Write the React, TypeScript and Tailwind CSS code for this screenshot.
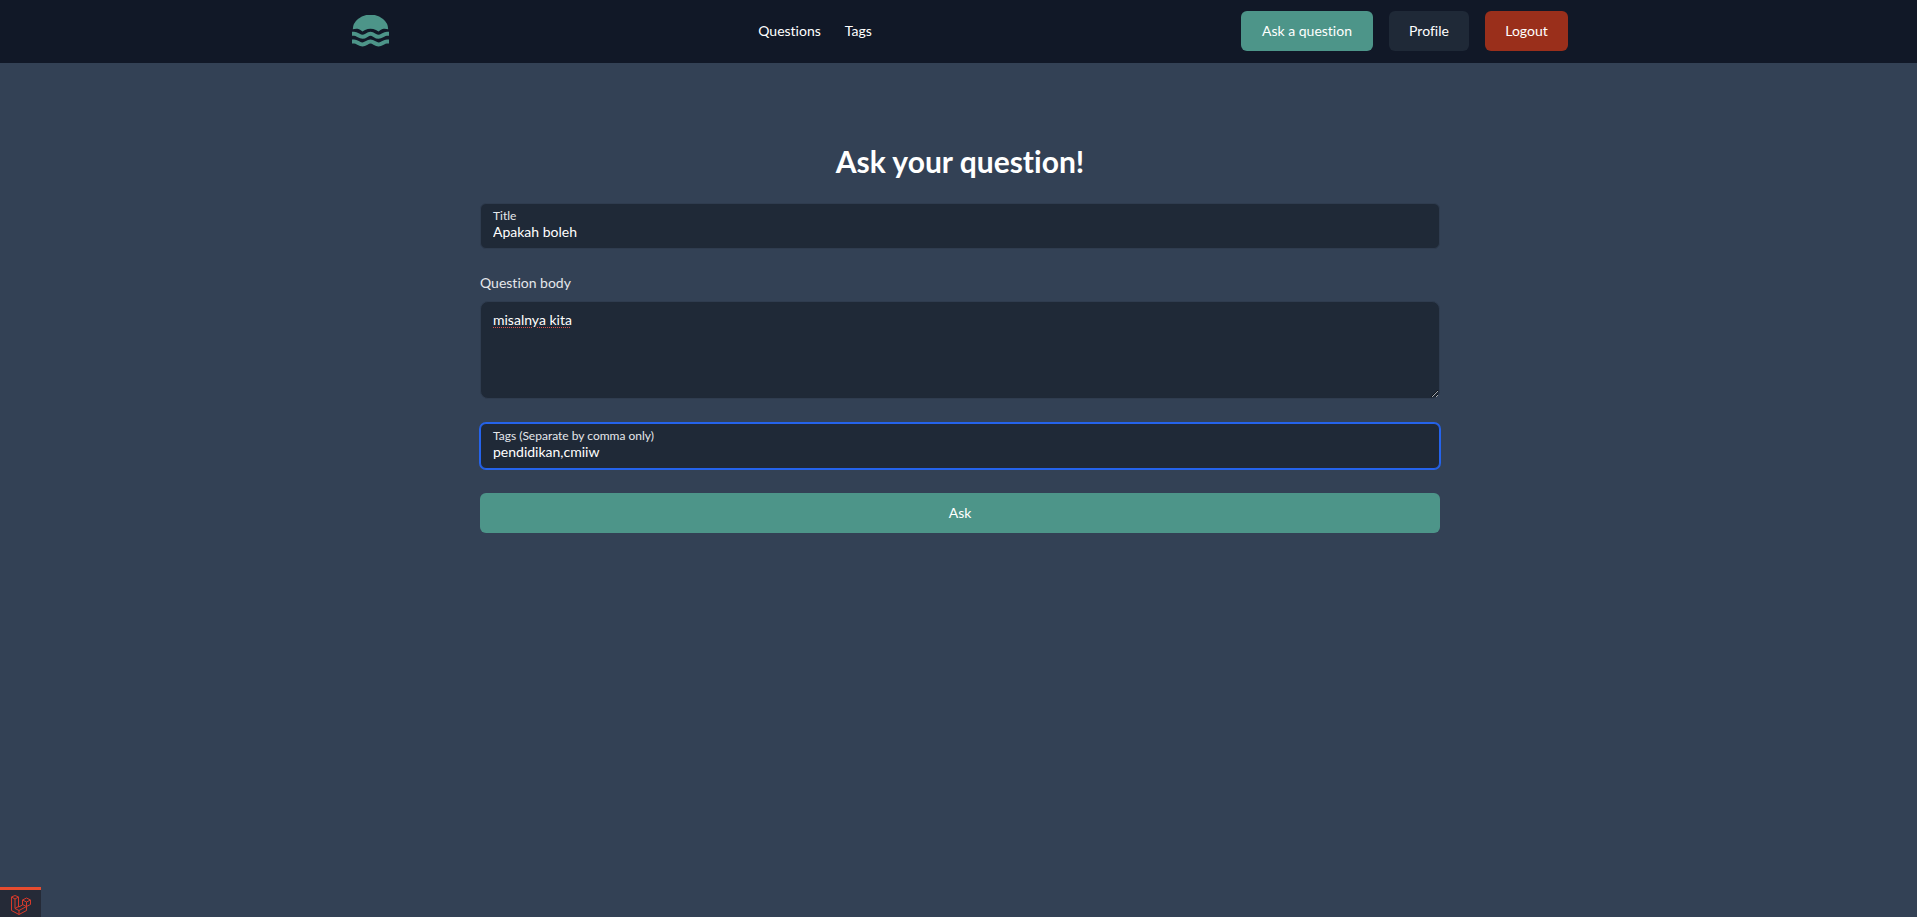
import { useState } from "react";

const buttonBase =
  "inline-flex h-10 items-center justify-center rounded-md text-sm text-white";

function WaveLogo() {
  return (
    <svg viewBox="0 0 37 32" className="h-8 w-[37px]" fill="#4d9589" aria-hidden="true">
      <path d="M0.8 14.2A17.7 14.6 0 0 1 36.2 14.2C33 13.3 30.5 13.5 28.5 15L26.5 16.5L24 15C20.5 13.2 16.5 13.2 13 15L10.5 16.5L8.5 15C6.5 13.5 4 13.3 0.8 14.2Z" />
      <path
        d="M0 18.8H2C5.5 18.8 7 21.8 10.5 21.8S15 18.8 18.5 18.8S23 21.8 26.5 21.8S31.5 18.8 35 18.8H37"
        fill="none"
        stroke="#4d9589"
        strokeWidth="4"
      />
      <path
        d="M0 26.6H2C5.5 26.6 7 29.5 10.5 29.5S15 26.6 18.5 26.6S23 29.5 26.5 29.5S31.5 26.6 35 26.6H37"
        fill="none"
        stroke="#4d9589"
        strokeWidth="4"
      />
    </svg>
  );
}

function LaravelMark() {
  return (
    <svg
      viewBox="0 0 20 20"
      className="h-5 w-5"
      fill="none"
      stroke="#d63a2b"
      strokeWidth="1"
      strokeLinejoin="round"
      aria-hidden="true"
    >
      <path d="M0.5 2L4 0.5L7.5 2V12L11.5 10V5L15.5 3L19.5 5V9.5L15.5 11.5V15.5L8 19.5L0.5 15.5ZM0.5 2L4 4L7.5 2M4 4V13.5L8 15.5L15.5 11.5L11.5 9.5M11.5 5L15.5 7L19.5 5M15.5 7V11.5M8 15.5V19.5M4 13.5L7.5 11.5" />
    </svg>
  );
}

type FieldProps = {
  id: string;
  label: string;
  value: string;
  focused?: boolean;
  onChange: (value: string) => void;
};

function FloatingField({ id, label, value, focused, onChange }: FieldProps) {
  const ring = focused
    ? "border-[#2563eb] ring-1 ring-[#2563eb]"
    : "border-[#2f3c4f]";
  return (
    <div className={`flex h-[46px] flex-col rounded-md border bg-[#1f2937] px-3 pt-1 ${ring}`}>
      <label htmlFor={id} className="text-xs text-gray-200">
        {label}
      </label>
      <input
        id={id}
        type="text"
        value={value}
        onChange={(event) => onChange(event.target.value)}
        className="h-4 w-full bg-transparent text-sm leading-4 text-white outline-none"
      />
    </div>
  );
}

export default function App() {
  const [title, setTitle] = useState("Apakah boleh");
  const [body, setBody] = useState("misalnya kita");
  const [tags, setTags] = useState("pendidikan,cmiiw");

  return (
    <div className="flex min-h-screen flex-col bg-[#334155] font-['Lato',sans-serif] text-white [font-variant-ligatures:none]">
      <header className="bg-[#111827] pl-[3px]">
        <div className="mx-auto flex max-w-[1216px] items-center justify-between pt-[11px] pb-3">
          <a href="#" aria-label="Home">
            <WaveLogo />
          </a>
          <nav className="flex gap-6 text-sm">
            <a href="#questions">Questions</a>
            <a href="#tags">Tags</a>
          </nav>
          <div className="flex gap-4">
            <button type="button" className={`${buttonBase} w-[132px] bg-[#4d9589]`}>
              Ask a question
            </button>
            <button type="button" className={`${buttonBase} w-20 bg-[#1f2937]`}>
              Profile
            </button>
            <button type="button" className={`${buttonBase} w-[83px] bg-[#9a2f1b]`}>
              Logout
            </button>
          </div>
        </div>
      </header>

      <main className="flex-1 pl-[3px] pt-20">
        <form
          className="mx-auto flex max-w-[960px] flex-col gap-6"
          onSubmit={(event) => event.preventDefault()}
        >
          <h1 className="text-center text-3xl font-bold">Ask your question!</h1>
          <FloatingField id="title" label="Title" value={title} onChange={setTitle} />
          <div className="flex flex-col gap-2">
            <label htmlFor="body" className="text-sm text-gray-200">
              Question body
            </label>
            <textarea
              id="body"
              value={body}
              spellCheck={false}
              onChange={(event) => setBody(event.target.value)}
              className="block h-[98px] w-full rounded-lg border border-[#2f3c4f] bg-[#1f2937] px-3 py-2 text-sm text-white underline decoration-[#e0524a] decoration-dotted decoration-1 underline-offset-2 outline-none"
            />
          </div>
          <FloatingField
            id="tags"
            label="Tags (Separate by comma only)"
            value={tags}
            focused
            onChange={setTags}
          />
          <button type="submit" className={`${buttonBase} w-full bg-[#4d9589]`}>
            Ask
          </button>
        </form>
      </main>

      <footer className="flex">
        <button
          type="button"
          aria-label="Open debug bar"
          className="flex h-[30px] w-[41px] items-center justify-center border-t-3 border-[#e74c2f] bg-[#252a37] pt-0.5"
        >
          <LaravelMark />
        </button>
      </footer>
    </div>
  );
}
